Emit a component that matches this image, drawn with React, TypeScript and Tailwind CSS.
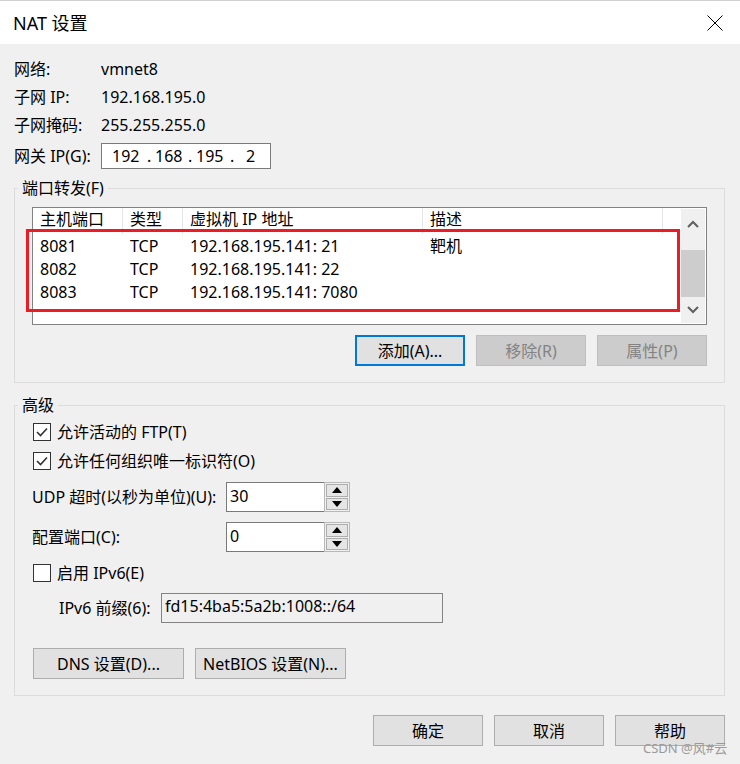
import type { ReactNode } from "react";

const cols = [90, 60, 240, 240];

const rows = [
  ["8081", "TCP", "192.168.195.141: 21", "靶机"],
  ["8082", "TCP", "192.168.195.141: 22", ""],
  ["8083", "TCP", "192.168.195.141: 7080", ""],
];

function Btn({ children, w = 110, variant = "normal" }: { children: ReactNode; w?: number; variant?: "normal" | "focus" | "disabled" }) {
  const cls =
    variant === "focus"
      ? "border-2 border-[#0078d7] bg-[#e1e1e1] text-black"
      : variant === "disabled"
      ? "border border-[#bfbfbf] bg-[#cccccc] text-[#838383]"
      : "border border-[#adadad] bg-[#e1e1e1] text-black";
  return (
    <div className={`h-[31px] flex items-center justify-center leading-[20px] ${cls}`} style={{ width: w }}>
      {children}
    </div>
  );
}

function Check({ on }: { on: boolean }) {
  return (
    <div className="w-[18px] h-[18px] border border-[#333333] bg-white flex items-center justify-center">
      {on && (
        <svg width="14" height="14" viewBox="0 0 14 14">
          <polyline points="2,7 5.5,10.5 12,3.5" fill="none" stroke="#333333" strokeWidth="1.6" />
        </svg>
      )}
    </div>
  );
}

function Tri({ up }: { up: boolean }) {
  return (
    <svg width="10" height="6" viewBox="0 0 10 6">
      <polygon points={up ? "0,6 10,6 5,0" : "0,0 10,0 5,6"} fill="#000" />
    </svg>
  );
}

function Spin({ value }: { value: string }) {
  return (
    <div className="flex w-[124px] h-[30px]">
      <div className="w-[98px] h-full border border-[#7a7a7a] border-r-0 bg-white pl-[3px] pt-[2px] leading-[22px]">{value}</div>
      <div className="w-[26px] h-full border border-[#b9b9b9] bg-[#f0f0f0] flex flex-col gap-[1px] p-[1px]">
        <div className="flex-1 bg-[#e5e5e5] border border-[#adadad] flex items-center justify-center">
          <Tri up />
        </div>
        <div className="flex-1 bg-[#e5e5e5] border border-[#adadad] flex items-center justify-center">
          <Tri up={false} />
        </div>
      </div>
    </div>
  );
}

function Chevron({ up }: { up: boolean }) {
  return (
    <svg width="12" height="8" viewBox="0 0 12 8">
      <polyline points={up ? "1,7 6,2 11,7" : "1,1 6,6 11,1"} fill="none" stroke="#606060" strokeWidth="2" />
    </svg>
  );
}

export default function App() {
  return (
    <div className="relative w-[740px] h-[764px] overflow-hidden bg-[#f0f0f0] text-black text-[16px] font-['Noto_Sans','Noto_Sans_CJK_SC',sans-serif]">
      {/* title bar */}
      <div className="h-[44px] bg-white flex items-center justify-between pl-[13px] pr-[17px] border-t border-[#d0d0d0]">
        <span className="text-[18px] leading-[24px]">NAT 设置</span>
        <svg width="16" height="16" viewBox="0 0 16 16">
          <path d="M0.5 0.5 L15.5 15.5 M15.5 0.5 L0.5 15.5" stroke="#000" strokeWidth="1" />
        </svg>
      </div>

      <div className="pl-[14px] pr-[15px]">
        {/* network info */}
        <div className="pt-[11px]">
          {[
            ["网络:", "vmnet8"],
            ["子网 IP:", "192.168.195.0"],
            ["子网掩码:", "255.255.255.0"],
          ].map(([k, v]) => (
            <div key={k} className="h-[28px] flex items-center">
              <span className="w-[87px]">{k}</span>
              <span>{v}</span>
            </div>
          ))}
          <div className="mt-[4px] h-[26px] flex items-center">
            <span className="w-[87px]">网关 IP(G):</span>
            <div className="w-[170px] h-[26px] border border-[#7a7a7a] bg-white flex items-center pl-[10px] leading-[20px]">
              <span className="w-[35px]">192</span>
              <span className="w-[8px]">.</span>
              <span className="w-[33px]">168</span>
              <span className="w-[8px]">.</span>
              <span className="w-[34px]">195</span>
              <span className="w-[16px]">.</span>
              <span>2</span>
            </div>
          </div>
        </div>

        {/* port forwarding */}
        <fieldset className="mt-[9px] w-[711px] border border-[#dcdcdc]">
          <legend className="ml-[3px] px-[4px] leading-[20px]">端口转发(F)</legend>
          <div className="pl-[17px] pr-[17px] pt-[9px] pb-[16px]">
            <div className="h-[118px] border border-[#828282] bg-white flex">
              <div className="flex-1">
                <div className="h-[26px] flex">
                  {["主机端口", "类型", "虚拟机 IP 地址", "描述"].map((h, i) => (
                    <div key={h} className="h-full border-r border-[#e5e5e5] pl-[7px] pt-[1px] leading-[20px] whitespace-nowrap" style={{ width: cols[i] }}>
                      {h}
                    </div>
                  ))}
                </div>
                {rows.map((r) => (
                  <div key={r[0]} className="h-[23px] flex items-center leading-[20px]">
                    {r.map((c, i) => (
                      <div key={i} className="pl-[7px] whitespace-nowrap" style={{ width: cols[i] }}>
                        {c}
                      </div>
                    ))}
                  </div>
                ))}
              </div>
              <div className="w-[24px] my-[1px] mr-[1px] bg-[#f0f0f0] flex flex-col">
                <div className="h-[30px] flex items-center justify-center">
                  <Chevron up />
                </div>
                <div className="h-[11px]" />
                <div className="h-[47px] bg-[#cdcdcd]" />
                <div className="flex-1 flex items-center justify-center">
                  <Chevron up={false} />
                </div>
              </div>
            </div>
            <div className="mt-[10px] flex justify-end gap-[11px]">
              <Btn variant="focus">添加(A)...</Btn>
              <Btn variant="disabled">移除(R)</Btn>
              <Btn variant="disabled">属性(P)</Btn>
            </div>
          </div>
        </fieldset>

        {/* advanced */}
        <fieldset className="mt-[12px] w-[711px] border border-[#dcdcdc]">
          <legend className="ml-[3px] px-[4px] leading-[20px]">高级</legend>
          <div className="pl-[18px] pt-[6px] pb-[16px]">
            <div className="h-[22px] flex items-center gap-[6px]">
              <Check on />
              <span className="leading-[20px]">允许活动的 FTP(T)</span>
            </div>
            <div className="mt-[7px] h-[22px] flex items-center gap-[6px]">
              <Check on />
              <span className="leading-[20px]">允许任何组织唯一标识符(O)</span>
            </div>
            <div className="mt-[10px] flex items-center">
              <span className="w-[194px] -ml-[1px]">UDP 超时(以秒为单位)(U):</span>
              <Spin value="30" />
            </div>
            <div className="mt-[10px] flex items-center">
              <span className="w-[194px] -ml-[1px]">配置端口(C):</span>
              <Spin value="0" />
            </div>
            <div className="mt-[10px] h-[22px] flex items-center gap-[6px]">
              <Check on={false} />
              <span className="leading-[20px]">启用 IPv6(E)</span>
            </div>
            <div className="mt-[9px] flex items-center pl-[26px]">
              <span className="w-[102px]">IPv6 前缀(6):</span>
              <div className="w-[282px] h-[30px] border border-[#838383] bg-[#f0f0f0] pl-[3px] pt-[1px] leading-[22px]">
                fd15:4ba5:5a2b:1008::/64
              </div>
            </div>
            <div className="mt-[25px] flex gap-[11px]">
              <Btn w={151}>DNS 设置(D)...</Btn>
              <Btn w={151}>NetBIOS 设置(N)...</Btn>
            </div>
          </div>
        </fieldset>

        {/* dialog buttons */}
        <div className="mt-[19px] flex justify-end gap-[11px]">
          <Btn>确定</Btn>
          <Btn>取消</Btn>
          <Btn>帮助</Btn>
        </div>
      </div>

      {/* annotation + watermark */}
      <div className="absolute left-[26px] top-[229px] w-[654px] h-[83px] border-[3px] border-[#ed1c24]" />
      <div className="absolute left-[643px] top-[740px] text-[13px] leading-[16px] text-[#9a9a9a]">CSDN @风#云</div>
    </div>
  );
}
